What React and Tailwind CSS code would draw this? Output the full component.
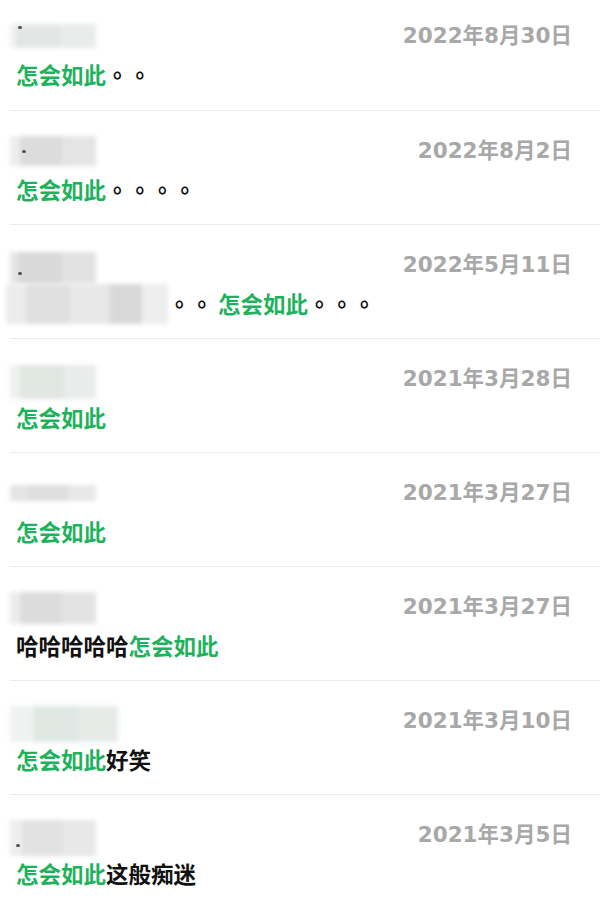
import React from "react";

const G = ({ children }) => <span className="text-[#1fb25d]">{children}</span>;
const P = ({ n }) => (
  <span style={{ fontFamily: '"Noto Sans CJK TC", sans-serif' }}>{"。".repeat(n)}</span>
);

const Mosaic = ({ cells, h, offsetY = 0, mark }) => (
  <div className="relative flex" style={{ height: h, marginTop: offsetY }}>
    <div className="flex h-full blur-[2px]">
      {cells.map((c, i) => (
        <div key={i} className="h-full" style={{ width: c[0], background: c[1] }} />
      ))}
    </div>
    {mark && (
      <div
        className="absolute w-[4px] h-[3px] rounded-full bg-[#555] blur-[0.5px]"
        style={{ left: mark[0], top: mark[1] }}
      />
    )}
  </div>
);

const rows = [
  {
    date: "2022年8月30日",
    name: <Mosaic h={24} cells={[[6, "#f1f2f2"], [42, "#e3e5e5"], [38, "#e9ebeb"]]} mark={[8, 2]} />,
    msg: (
      <>
        <G>怎会如此</G>
        <P n={2} />
      </>
    ),
  },
  {
    date: "2022年8月2日",
    name: <Mosaic h={30} cells={[[10, "#ededed"], [42, "#dcdcdc"], [34, "#e4e4e4"]]} mark={[12, 14]} />,
    msg: (
      <>
        <G>怎会如此</G>
        <P n={4} />
      </>
    ),
  },
  {
    date: "2022年5月11日",
    name: <Mosaic h={32} offsetY={6} cells={[[8, "#e6e6e6"], [44, "#d9d9d9"], [34, "#e2e2e2"]]} mark={[8, 20]} />,
    msg: (
      <>
        <span className="inline-flex align-middle -ml-[10px] h-[40px] w-[162px] blur-[2px] -mt-[6px]">
          <span className="h-full w-[20px] bg-[#ececec]" />
          <span className="h-full w-[44px] bg-[#e0e0e0]" />
          <span className="h-full w-[40px] bg-[#e8e8e8]" />
          <span className="h-full w-[32px] bg-[#d8d8d8]" />
          <span className="h-full w-[26px] bg-[#eeeeee]" />
        </span>
        <span className="text-[#111] mr-[5px]">
          <P n={2} />
        </span>
        <G>怎会如此</G>
        <P n={3} />
      </>
    ),
  },
  {
    date: "2021年3月28日",
    name: <Mosaic h={34} offsetY={6} cells={[[10, "#eef1ef"], [44, "#e0e6e2"], [32, "#e8ecea"]]} />,
    msg: <G>怎会如此</G>,
  },
  {
    date: "2021年3月27日",
    name: <Mosaic h={16} offsetY={0} cells={[[18, "#e4e4e4"], [40, "#dedede"], [28, "#e8e8e8"]]} />,
    msg: <G>怎会如此</G>,
  },
  {
    date: "2021年3月27日",
    name: <Mosaic h={32} offsetY={2} cells={[[10, "#ececec"], [42, "#dcdcdc"], [34, "#e3e3e3"]]} />,
    msg: (
      <>
        <span>哈哈哈哈哈</span>
        <G>怎会如此</G>
      </>
    ),
  },
  {
    date: "2021年3月10日",
    name: <Mosaic h={36} offsetY={6} cells={[[24, "#eef2f0"], [44, "#dfe7e3"], [40, "#e6ebe8"]]} />,
    msg: (
      <>
        <G>怎会如此</G>
        <span>好笑</span>
      </>
    ),
  },
  {
    date: "2021年3月5日",
    name: <Mosaic h={36} offsetY={6} cells={[[12, "#eeeeee"], [40, "#e2e2e2"], [34, "#e8e8e8"]]} mark={[6, 24]} />,
    msg: (
      <>
        <G>怎会如此</G>
        <span>这般痴迷</span>
      </>
    ),
  },
];

export default function App() {
  return (
    <div
      className="w-[600px] h-[907px] bg-white overflow-hidden"
      style={{ fontFamily: '"Noto Sans CJK SC", "Noto Sans", sans-serif' }}
    >
      {rows.map((r, i) => (
        <div
          key={i}
          className={`ml-[10px] border-b border-[#ececec] ${i === 0 ? "h-[111px] pt-[22px]" : "h-[114px] pt-[26px]"}`}
        >
          <div className="flex items-center justify-between h-[28px] pr-[28px]">
            <div className="w-[90px] flex">{r.name}</div>
            <div
              className="text-[21.5px] leading-[28px] font-bold text-[#a8a8a8]"
              style={{ fontFamily: '"DejaVu Sans", "Noto Sans CJK SC", sans-serif' }}
            >
              {r.date}
            </div>
          </div>
          <div className="mt-[9px] pl-[6px] h-[30px] text-[22.5px] leading-[30px] font-bold text-[#111] whitespace-nowrap">
            {r.msg}
          </div>
        </div>
      ))}
    </div>
  );
}
